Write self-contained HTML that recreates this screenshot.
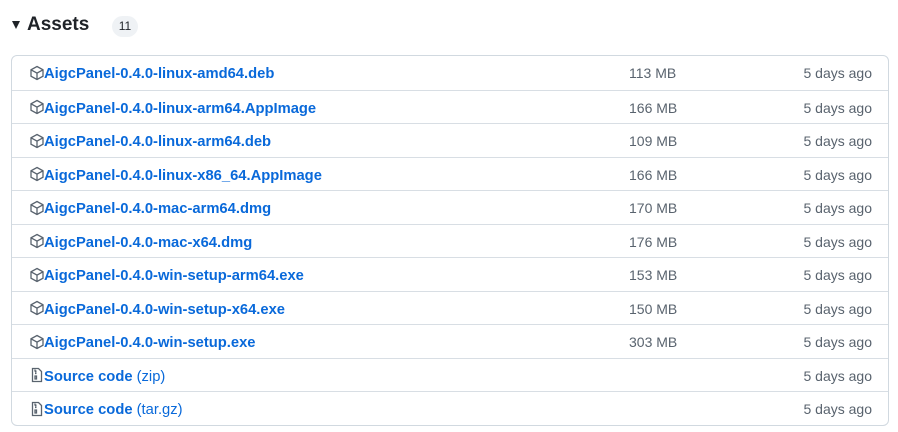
<!DOCTYPE html>
<html><head><style>
body{margin:0;background:#fff;font-family:"Liberation Sans",sans-serif;color:#1f2328;width:898px;height:432px;overflow:hidden}
.h{position:absolute;left:27px;top:13px;font-size:19px;font-weight:bold;line-height:24px}
.tri{position:absolute;left:12px;top:21px;width:0;height:0;border-left:4.5px solid transparent;border-right:4.5px solid transparent;border-top:8px solid #1f2328}
.badge{position:absolute;left:112px;top:16px;width:26px;height:21px;border-radius:11px;background:#eff2f5;font-size:12px;text-align:center;line-height:21px}
.box{position:absolute;left:11px;top:55px;width:876px;height:369px;border:1px solid #d1d9e0;border-radius:6px;overflow:hidden}
.r{height:33.55px;border-top:1px solid #d8dee4;box-sizing:border-box;position:relative;font-size:14px}
.r:first-child{border-top:none}
.r svg{position:absolute;left:17px;top:8.5px}
.r>span{position:absolute;top:1px;line-height:32px}
.r>span.n{top:2px}
.n{left:32px;color:#0969da;font-weight:bold;font-size:14.75px}
.n span{font-weight:normal}
.s{left:617px;color:#59636e}
.d{right:16px;color:#59636e}
</style></head><body>
<div class="tri"></div>
<div class="h">Assets</div>
<div class="badge">11</div>
<div class="box">
<div class="r"><svg width="16" height="16" viewBox="0 0 16 16" fill="none" stroke="#59636e" stroke-width="1.3"><path d="M8 1.5l6 3.3v6.4L8 14.5 2 11.2V4.8z M2 4.8l6 3.3 6-3.3 M8 8.1v6.4"/></svg><span class="n">AigcPanel-0.4.0-linux-amd64.deb</span><span class="s">113 MB</span><span class="d">5 days ago</span></div>
<div class="r"><svg width="16" height="16" viewBox="0 0 16 16" fill="none" stroke="#59636e" stroke-width="1.3"><path d="M8 1.5l6 3.3v6.4L8 14.5 2 11.2V4.8z M2 4.8l6 3.3 6-3.3 M8 8.1v6.4"/></svg><span class="n">AigcPanel-0.4.0-linux-arm64.AppImage</span><span class="s">166 MB</span><span class="d">5 days ago</span></div>
<div class="r"><svg width="16" height="16" viewBox="0 0 16 16" fill="none" stroke="#59636e" stroke-width="1.3"><path d="M8 1.5l6 3.3v6.4L8 14.5 2 11.2V4.8z M2 4.8l6 3.3 6-3.3 M8 8.1v6.4"/></svg><span class="n">AigcPanel-0.4.0-linux-arm64.deb</span><span class="s">109 MB</span><span class="d">5 days ago</span></div>
<div class="r"><svg width="16" height="16" viewBox="0 0 16 16" fill="none" stroke="#59636e" stroke-width="1.3"><path d="M8 1.5l6 3.3v6.4L8 14.5 2 11.2V4.8z M2 4.8l6 3.3 6-3.3 M8 8.1v6.4"/></svg><span class="n">AigcPanel-0.4.0-linux-x86_64.AppImage</span><span class="s">166 MB</span><span class="d">5 days ago</span></div>
<div class="r"><svg width="16" height="16" viewBox="0 0 16 16" fill="none" stroke="#59636e" stroke-width="1.3"><path d="M8 1.5l6 3.3v6.4L8 14.5 2 11.2V4.8z M2 4.8l6 3.3 6-3.3 M8 8.1v6.4"/></svg><span class="n">AigcPanel-0.4.0-mac-arm64.dmg</span><span class="s">170 MB</span><span class="d">5 days ago</span></div>
<div class="r"><svg width="16" height="16" viewBox="0 0 16 16" fill="none" stroke="#59636e" stroke-width="1.3"><path d="M8 1.5l6 3.3v6.4L8 14.5 2 11.2V4.8z M2 4.8l6 3.3 6-3.3 M8 8.1v6.4"/></svg><span class="n">AigcPanel-0.4.0-mac-x64.dmg</span><span class="s">176 MB</span><span class="d">5 days ago</span></div>
<div class="r"><svg width="16" height="16" viewBox="0 0 16 16" fill="none" stroke="#59636e" stroke-width="1.3"><path d="M8 1.5l6 3.3v6.4L8 14.5 2 11.2V4.8z M2 4.8l6 3.3 6-3.3 M8 8.1v6.4"/></svg><span class="n">AigcPanel-0.4.0-win-setup-arm64.exe</span><span class="s">153 MB</span><span class="d">5 days ago</span></div>
<div class="r"><svg width="16" height="16" viewBox="0 0 16 16" fill="none" stroke="#59636e" stroke-width="1.3"><path d="M8 1.5l6 3.3v6.4L8 14.5 2 11.2V4.8z M2 4.8l6 3.3 6-3.3 M8 8.1v6.4"/></svg><span class="n">AigcPanel-0.4.0-win-setup-x64.exe</span><span class="s">150 MB</span><span class="d">5 days ago</span></div>
<div class="r"><svg width="16" height="16" viewBox="0 0 16 16" fill="none" stroke="#59636e" stroke-width="1.3"><path d="M8 1.5l6 3.3v6.4L8 14.5 2 11.2V4.8z M2 4.8l6 3.3 6-3.3 M8 8.1v6.4"/></svg><span class="n">AigcPanel-0.4.0-win-setup.exe</span><span class="s">303 MB</span><span class="d">5 days ago</span></div>
<div class="r"><svg width="16" height="16" viewBox="0 0 16 16" fill="none" stroke="#59636e" stroke-width="1.3"><path d="M3.5 1.5h6l3 3v10h-9z M6 2.5v1.5h1.5 M6 5h1.5 M6 6.5h1.5 M6 9h1.5v3H6z"/></svg><span class="n">Source code <span>(zip)</span></span><span class="d">5 days ago</span></div>
<div class="r"><svg width="16" height="16" viewBox="0 0 16 16" fill="none" stroke="#59636e" stroke-width="1.3"><path d="M3.5 1.5h6l3 3v10h-9z M6 2.5v1.5h1.5 M6 5h1.5 M6 6.5h1.5 M6 9h1.5v3H6z"/></svg><span class="n">Source code <span>(tar.gz)</span></span><span class="d">5 days ago</span></div>
</div>
</body></html>
